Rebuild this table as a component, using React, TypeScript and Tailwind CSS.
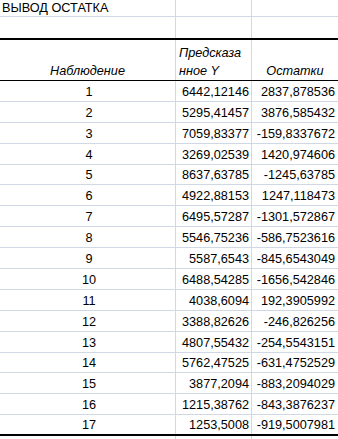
const ROWS: [string, string, string][] = [
  ["1", "6442,12146", "2837,878536"],
  ["2", "5295,41457", "3876,585432"],
  ["3", "7059,83377", "-159,8337672"],
  ["4", "3269,02539", "1420,974606"],
  ["5", "8637,63785", "-1245,63785"],
  ["6", "4922,88153", "1247,118473"],
  ["7", "6495,57287", "-1301,572867"],
  ["8", "5546,75236", "-586,7523616"],
  ["9", "5587,6543", "-845,6543049"],
  ["10", "6488,54285", "-1656,542846"],
  ["11", "4038,6094", "192,3905992"],
  ["12", "3388,82626", "-246,826256"],
  ["13", "4807,55432", "-254,5543151"],
  ["14", "5762,47525", "-631,4752529"],
  ["15", "3877,2094", "-883,2094029"],
  ["16", "1215,38762", "-843,3876237"],
  ["17", "1253,5008", "-919,5007981"],
];

const grid = "grid grid-cols-[176px_76px_86px]";
const line = "border-r border-[#d0d7e5]";

export default function App() {
  return (
    <div className="w-[338px] h-[439px] overflow-hidden bg-white text-black text-[12.7px] font-['Liberation_Sans',Arial,sans-serif]">
      {/* title */}
      <div className={`${grid} h-[17px] border-b border-[#d0d7e5]`}>
        <div className={`${line} flex items-end pl-[2px] leading-[15px] whitespace-nowrap`}>
          ВЫВОД ОСТАТКА
        </div>
        <div className={line} />
        <div />
      </div>

      {/* empty row */}
      <div className={`${grid} h-[23px] border-b-2 border-black`}>
        <div className={line} />
        <div className={line} />
        <div />
      </div>

      {/* header */}
      <div className={`${grid} h-[41px] border-b border-black italic leading-[18px]`}>
        <div className={`${line} flex items-end justify-center`}>Наблюдение</div>
        <div className={`${line} flex flex-col justify-end pl-[3px]`}>
          <span>Предсказа</span>
          <span>нное Y</span>
        </div>
        <div className="flex items-end justify-center">Остатки</div>
      </div>

      {/* data */}
      {ROWS.map(([n, y, r], i) => (
        <div
          key={n}
          className={`${grid} h-[20.9px] leading-[15px] ${
            i === ROWS.length - 1 ? "border-b-2 border-black" : "border-b border-[#d0d7e5]"
          }`}
        >
          <div className={`${line} flex items-end justify-center pb-[1px] pl-[3px]`}>{n}</div>
          <div className={`${line} flex items-end justify-end pb-[1px] pr-[2px]`}>{y}</div>
          <div className="flex items-end justify-end pb-[1px] pr-[3px]">{r}</div>
        </div>
      ))}

      <div className={`${grid} h-[20px]`}>
        <div className={line} />
        <div className={line} />
        <div />
      </div>
    </div>
  );
}
